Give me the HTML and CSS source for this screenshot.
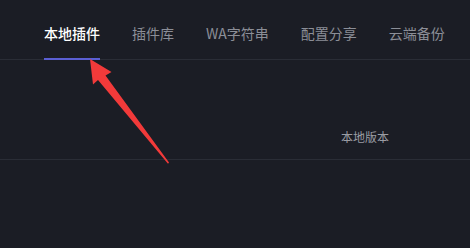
FILE: index.html
```html
<!DOCTYPE html>
<html lang="zh">
<head>
<meta charset="utf-8">
<link rel="stylesheet" href="styles.css">
</head>
<body>
<div class="page">
  <nav class="tabs">
    <div class="tab active">本地插件</div>
    <div class="tab">插件库</div>
    <div class="tab">WA字符串</div>
    <div class="tab">配置分享</div>
    <div class="tab">云端备份</div>
  </nav>
  <div class="table-head">
    <div class="col-spacer"></div>
    <div class="col-version">本地版本</div>
  </div>
  <svg class="arrow" width="470" height="248" viewBox="0 0 470 248">
    <polygon fill="#f23a3a" points="90,59 111.5,72 105.5,75.5 169,162.4 168,163.8 98,80 93,84.5"/>
  </svg>
</div>
</body>
</html>
```
FILE: styles.css
```css
* { box-sizing: border-box; }
html, body {
  margin: 0;
  padding: 0;
  background: #1b1d25;
}
body {
  font-family: "Noto Sans CJK SC", "Noto Sans", sans-serif;
  width: 470px;
  height: 248px;
  overflow: hidden;
}
.page {
  position: relative;
  width: 470px;
  height: 248px;
}
.tabs {
  display: flex;
  align-items: flex-start;
  gap: 32px;
  height: 60px;
  padding-left: 44px;
  border-bottom: 1px solid #2a2d36;
  white-space: nowrap;
}
.tab {
  height: 60px;
  margin-bottom: -1px;
  padding-top: 23px;
  font-size: 14px;
  line-height: 20px;
  color: #8b8e97;
  border-bottom: 2px solid transparent;
}
.tab.active {
  color: #ffffff;
  font-weight: 500;
  border-bottom-color: #5b5fd3;
}
.table-head {
  display: grid;
  grid-template-columns: 341px auto;
  height: 100px;
  border-bottom: 1px solid #2a2d36;
  padding-top: 69px;
}
.col-version {
  font-size: 12px;
  line-height: 16px;
  color: #9a9ca3;
}
.arrow {
  position: absolute;
  left: 0;
  top: 0;
  pointer-events: none;
}
```
